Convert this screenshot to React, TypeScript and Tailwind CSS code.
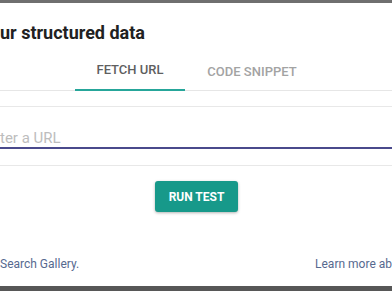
export default function App() {
  return (
    <div
      className="relative flex h-[291px] w-[392px] flex-col overflow-hidden bg-white"
      style={{ fontFamily: "Roboto, 'Liberation Sans', sans-serif" }}
    >
      <div className="h-[3px] w-full shrink-0 bg-[#6f6f6f]" />
      <div className="mt-[18px] h-[24px] whitespace-nowrap text-[18px] font-bold leading-[24px] text-[#212121]">
        ur structured data
      </div>
      <div className="relative flex h-[46px] shrink-0 pl-[75px]">
        <div className="absolute bottom-0 left-0 h-px w-full bg-[#e6e6e6]" />
        <div className="relative flex w-[110px] items-end justify-center border-b-2 border-[#26a69a] pb-[11px] text-[13px] font-medium leading-[16px] text-[#5f5f5f]">
          FETCH URL
        </div>
        <div className="relative flex w-[134px] items-end justify-center pb-[11px] text-[13px] font-medium leading-[16px] text-[#a3a3a3]">
          CODE SNIPPET
        </div>
      </div>
      <div className="mt-[15px] flex h-[60px] shrink-0 flex-col border-y border-[#e8e8e8]">
        <div className="mt-[22px] h-[20px] border-b-2 border-[#4a4a8c] text-[15px] leading-[18px] text-[#bdbdbd]">
          ter a URL
        </div>
      </div>
      <div className="mt-[15px] flex justify-center pl-[1px]">
        <div className="flex h-[31px] w-[83px] items-center justify-center rounded-[3px] bg-[#17998a] text-[12px] font-bold text-white shadow-[0_1px_3px_rgba(0,0,0,0.3)]">
          RUN TEST
        </div>
      </div>
      <div className="mt-[44px] flex items-center justify-between whitespace-nowrap text-[12px] leading-[16px] text-[#56698f]">
        <span>Search Gallery.</span>
        <span>Learn more ab</span>
      </div>
      <div className="mt-auto h-[5px] w-full shrink-0 bg-[#575757]" />
    </div>
  );
}
